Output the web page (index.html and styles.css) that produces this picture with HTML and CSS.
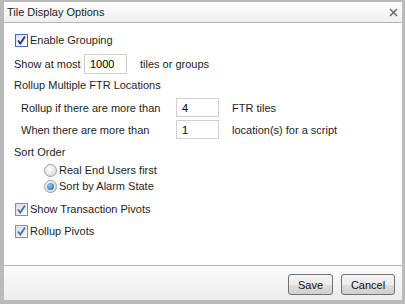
FILE: index.html
```html
<!DOCTYPE html>
<html lang="en">
<head>
    <meta charset="UTF-8">
    <title>Tile Display Options</title>
    <link rel="stylesheet" href="styles.css">
</head>
<body>
    <div class="dialog">
        <div class="titlebar">
            <span class="title">Tile Display Options</span>
            <svg class="close" width="9" height="9" viewBox="0 0 9 9">
                <path d="M1 1 L8 8 M8 1 L1 8" stroke="#6b6b6b" stroke-width="1.6" fill="none"/>
            </svg>
        </div>

        <div class="content">
            <div class="row r-enable">
                <span class="check dark"><svg width="11" height="11" viewBox="0 0 11 11"><path d="M2 5.5 L4.3 8.5 L9 1.5" stroke="#1c3f94" stroke-width="2" fill="none"/></svg></span>
                <span class="lbl">Enable Grouping</span>
            </div>

            <div class="row r-max">
                <span class="cap w-max">Show at most</span>
                <span class="field">1000</span>
                <span class="after">tiles or groups</span>
            </div>

            <div class="row r-head">Rollup Multiple FTR Locations</div>

            <div class="row r-roll indent">
                <span class="cap w-roll">Rollup if there are more than</span>
                <span class="field">4</span>
                <span class="after">FTR tiles</span>
            </div>

            <div class="row r-when indent">
                <span class="cap w-roll">When there are more than</span>
                <span class="field">1</span>
                <span class="after">location(s) for a script</span>
            </div>

            <div class="row r-sort">Sort Order</div>

            <div class="row r-radio1 radio-row">
                <span class="radio"></span>
                <span class="lbl">Real End Users first</span>
            </div>
            <div class="row r-radio2 radio-row">
                <span class="radio on"><span class="dot"></span></span>
                <span class="lbl">Sort by Alarm State</span>
            </div>

            <div class="row r-pivots">
                <span class="check"><svg width="11" height="11" viewBox="0 0 11 11"><path d="M2 5.5 L4.3 8.5 L9 1.5" stroke="#4a78c8" stroke-width="2" fill="none"/></svg></span>
                <span class="lbl">Show Transaction Pivots</span>
            </div>
            <div class="row r-rollpiv">
                <span class="check"><svg width="11" height="11" viewBox="0 0 11 11"><path d="M2 5.5 L4.3 8.5 L9 1.5" stroke="#4a78c8" stroke-width="2" fill="none"/></svg></span>
                <span class="lbl">Rollup Pivots</span>
            </div>
        </div>

        <div class="footer">
            <button class="btn save">Save</button>
            <button class="btn cancel">Cancel</button>
        </div>
    </div>
</body>
</html>
```

FILE: styles.css
```css
/* Marco general */
body {
    margin: 0;
    background-color: #bababa;
    font-family: "Liberation Sans", Arial, sans-serif;
    font-size: 11px;
    color: #1e1e1e;
}

.dialog {
    margin: 2px 3px 4px 4px;
    height: 298px;
    background-color: #ffffff;
    display: flex;
    flex-direction: column;
}

/* Barra de titulo */
.titlebar {
    height: 20px;
    border-bottom: 1px solid #b4b4b4;
    background: linear-gradient(#ffffff, #efefef);
    display: flex;
    align-items: center;
    justify-content: space-between;
    padding: 0 4px 0 3px;
}

.title {
    color: #222;
}

.close {
    margin-top: 1px;
}

/* Contenido */
.content {
    flex: 1;
    padding-left: 10px;
}

.row {
    display: flex;
    align-items: center;
    height: 14px;
}

.indent {
    padding-left: 7px;
}

.r-enable { margin-top: 10px; }
.r-max { margin-top: 7px; height: 20px; }
.r-head { margin-top: 4px; }
.r-roll { margin-top: 6px; height: 19px; }
.r-when { margin-top: 3px; height: 19px; }
.r-sort { margin-top: 6px; }
.r-radio1 { margin-top: 4px; }
.r-radio2 { margin-top: 2px; }
.r-pivots { margin-top: 9px; }
.r-rollpiv { margin-top: 8px; }

.cap {
    flex-shrink: 0;
}

.w-max { width: 70px; }
.w-roll { width: 155px; }

.field {
    box-sizing: border-box;
    width: 43px;
    height: 100%;
    border: 1px solid #cfcfcf;
    padding-left: 5px;
    display: flex;
    align-items: center;
    color: #000;
}

.after {
    margin-left: 13px;
}

/* Casillas */
.check {
    box-sizing: border-box;
    width: 13px;
    height: 13px;
    margin-left: 1px;
    margin-right: 2px;
    border: 1px solid #8e8f8f;
    background: linear-gradient(135deg, #dcdcdc, #fbfbfb);
    display: flex;
    align-items: center;
    justify-content: center;
}

.check.dark {
    border-color: #3c6fb0;
    background: linear-gradient(135deg, #d6e6f7, #ffffff);
}

.radio-row {
    padding-left: 30px;
}

.radio {
    box-sizing: border-box;
    width: 13px;
    height: 13px;
    margin-right: 2px;
    border-radius: 50%;
    border: 1px solid #a0a0a0;
    background: radial-gradient(circle at 40% 35%, #ffffff, #d0d0d0);
    display: flex;
    align-items: center;
    justify-content: center;
}

.radio .dot {
    width: 7px;
    height: 7px;
    border-radius: 50%;
    background: radial-gradient(circle at 40% 35%, #8fd0ff, #0f5aa0);
}

/* Pie con botones */
.footer {
    height: 35px;
    border-top: 1px solid #b4b4b4;
    background: linear-gradient(#fbfbfb, #ececec);
    display: flex;
    justify-content: flex-end;
    align-items: flex-start;
    padding: 8px 7px 0 0;
    box-sizing: border-box;
    gap: 8px;
}

.btn {
    height: 21px;
    border: 1px solid #707070;
    border-radius: 3px;
    background: linear-gradient(#f4f4f4 0%, #ebebeb 50%, #dddddd 51%, #cfcfcf 100%);
    font-family: "Liberation Sans", Arial, sans-serif;
    font-size: 11px;
    color: #111;
    padding: 0;
}

.save { width: 45px; }
.cancel { width: 54px; }
```
